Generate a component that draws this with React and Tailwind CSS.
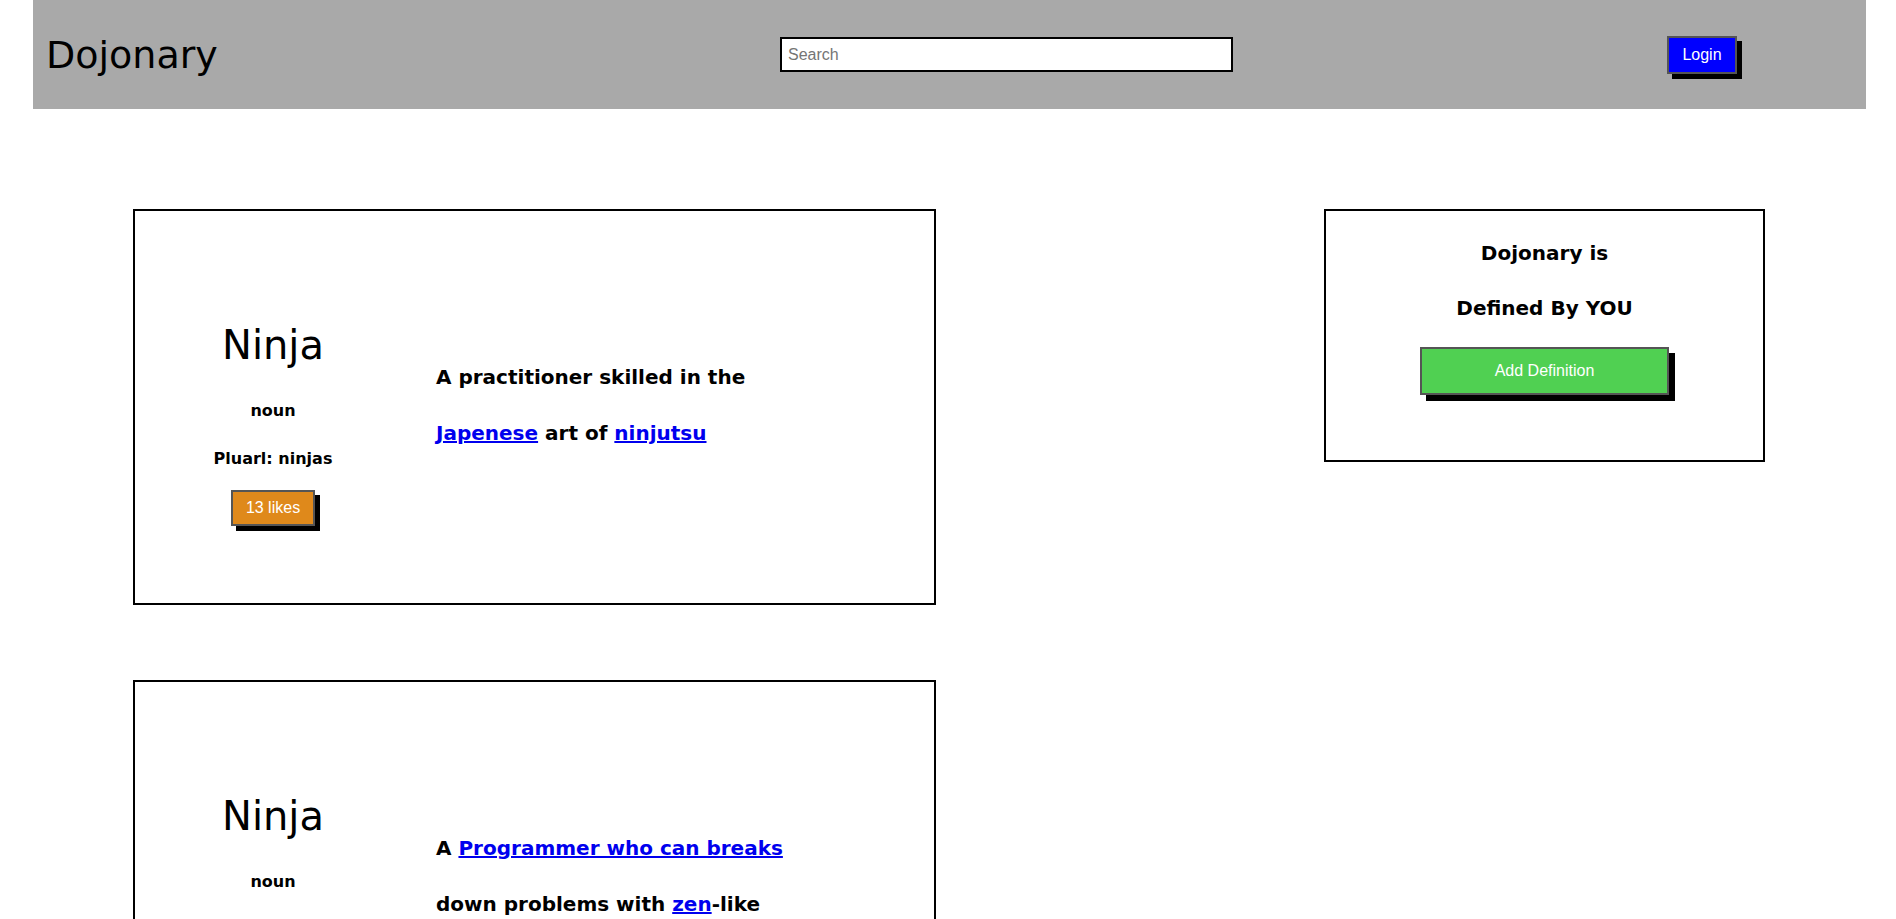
import React from 'react'

const entries = [
  {
    word: 'Ninja',
    type: 'noun',
    plural: 'ninjas',
    likes: 13,
    lines: [
      <>A practitioner skilled in the</>,
      <>
        <a href="#" className="text-[#0000ee] underline">Japenese</a> art of{' '}
        <a href="#" className="text-[#0000ee] underline">ninjutsu</a>
      </>,
    ],
  },
  {
    word: 'Ninja',
    type: 'noun',
    plural: 'ninjas',
    likes: 8,
    lines: [
      <>
        A <a href="#" className="text-[#0000ee] underline">Programmer who can breaks</a>
      </>,
      <>
        down problems with <a href="#" className="text-[#0000ee] underline">zen</a>-like
      </>,
      <>focus and precision</>,
    ],
  },
]

function EntryCard({ entry }) {
  return (
    <div className="h-[396px] border-2 border-black flex items-start">
      {/* word side */}
      <div className="w-[276px] pt-[114px] flex flex-col items-center text-center">
        <h2 className="text-[40px] leading-[40px] font-normal">{entry.word}</h2>
        <p className="mt-[34px] text-[16px] leading-[24px] font-bold">{entry.type}</p>
        <p className="mt-[24px] text-[16px] leading-[24px] font-bold">Pluarl: {entry.plural}</p>
        <button className="mt-[19px] w-[84px] h-[36px] bg-[#df891b] border-2 border-[#555] text-white text-[16px] font-['Liberation_Sans',Arial,sans-serif] shadow-[5px_5px_0_#000]">
          {entry.likes} likes
        </button>
      </div>

      {/* definition side */}
      <div className="ml-[25px] pt-[138px] text-[20px] leading-[56px] font-bold">
        {entry.lines.map((line, i) => (
          <div key={i}>{line}</div>
        ))}
      </div>
    </div>
  )
}

export default function App() {
  return (
    <div className="min-h-screen bg-white text-black font-['Comic_Sans_MS','DejaVu_Sans',sans-serif]">
      <header className="ml-[33px] w-[1833px] h-[109px] bg-[#a9a9a9] flex items-center">
        <div className="w-[747px] pl-[13px]">
          <h1 className="text-[38px] leading-none font-normal">Dojonary</h1>
        </div>
        <input
          type="text"
          placeholder="Search"
          className="w-[453px] h-[35px] bg-white border-2 border-black px-[6px] text-[16px] font-['Liberation_Sans',Arial,sans-serif] placeholder-[#757575] outline-none"
        />
        <button className="ml-[434px] w-[70px] h-[38px] bg-[#0000ff] border-2 border-[#555] text-white text-[16px] font-['Liberation_Sans',Arial,sans-serif] shadow-[5px_5px_0_#000]">
          Login
        </button>
      </header>

      <main className="flex items-start pt-[100px] pb-[80px]">
        <div className="ml-[133px] w-[803px] flex flex-col gap-[75px]">
          {entries.map((entry, i) => (
            <EntryCard key={i} entry={entry} />
          ))}
        </div>

        <aside className="ml-[388px] w-[441px] h-[253px] border-2 border-black flex flex-col items-center pt-[28px] text-center">
          <p className="text-[20px] leading-[28px] font-bold">Dojonary is</p>
          <p className="mt-[27px] text-[20px] leading-[28px] font-bold">Defined By YOU</p>
          <button className="mt-[25px] w-[249px] h-[48px] bg-[#50d052] border-2 border-[#555] text-white text-[16px] font-['Liberation_Sans',Arial,sans-serif] shadow-[6px_6px_0_#000]">
            Add Definition
          </button>
        </aside>
      </main>
    </div>
  )
}
